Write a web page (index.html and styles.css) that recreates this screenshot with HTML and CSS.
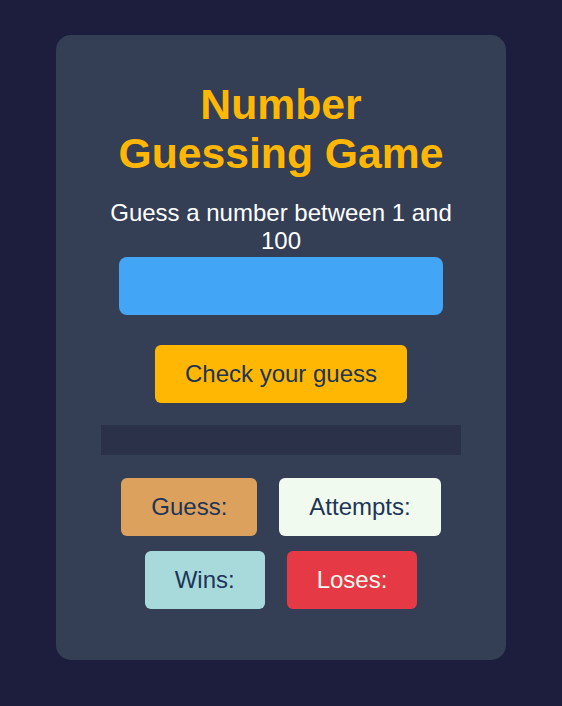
FILE: index.html
```html
<!DOCTYPE html>
<html lang="en">
<head>
<meta charset="UTF-8">
<title>Number Guessing Game</title>
<link rel="stylesheet" href="styles.css">
</head>
<body>
<main class="card">
  <h1 class="title">Number Guessing Game</h1>
  <p class="subtitle">Guess a number between 1 and 100</p>
  <input class="guess-input" type="number" aria-label="Your guess">
  <button class="check-btn" type="button">Check your guess</button>
  <div class="message"></div>
  <div class="stats">
    <div class="stat stat-guess">Guess:</div>
    <div class="stat stat-attempts">Attempts:</div>
    <div class="stat stat-wins">Wins:</div>
    <div class="stat stat-loses">Loses:</div>
  </div>
</main>
</body>
</html>
```
FILE: styles.css
```css
* { box-sizing: border-box; }
html, body {
  margin: 0;
  background: #1d1d3d;
  font-family: "Liberation Sans", Arial, sans-serif;
}
body {
  padding-top: 35px;
  height: 706px;
}
.card {
  width: 450px;
  margin: 0 auto;
  background: #343f56;
  border-radius: 15px;
  padding: 45px 45px 51px;
  display: flex;
  flex-direction: column;
  align-items: center;
  text-align: center;
}
.title {
  margin: 0;
  color: #ffb703;
  font-size: 42.7px;
  line-height: 48.5px;
  font-weight: bold;
}
.subtitle {
  margin: 22px 0 0;
  color: #ffffff;
  font-size: 24px;
  line-height: 28px;
  width: 100%;
}
.guess-input {
  display: block;
  margin-top: 2px;
  width: 324px;
  height: 58px;
  border: none;
  border-radius: 8px;
  background: #42a5f5;
  font-size: 24px;
  padding: 15px;
  outline: none;
}
.check-btn {
  margin-top: 30px;
  height: 58px;
  padding: 0 30px;
  border: none;
  border-radius: 6px;
  background: #ffb703;
  color: #1d3557;
  font-family: inherit;
  font-size: 24px;
}
.message {
  margin-top: 22px;
  width: 360px;
  height: 30px;
  background: #2b3149;
}
.stats {
  margin-top: 23px;
  width: 100%;
  display: flex;
  flex-wrap: wrap;
  justify-content: center;
  gap: 15px 22px;
}
.stat {
  height: 58px;
  padding: 0 30px;
  border-radius: 6px;
  font-size: 24px;
  line-height: 58px;
  color: #1d3557;
}
.stat-guess { background: #dda15e; }
.stat-attempts { background: #f1faee; }
.stat-wins { background: #a8dadc; }
.stat-loses { background: #e63946; color: #f1faee; }
```
